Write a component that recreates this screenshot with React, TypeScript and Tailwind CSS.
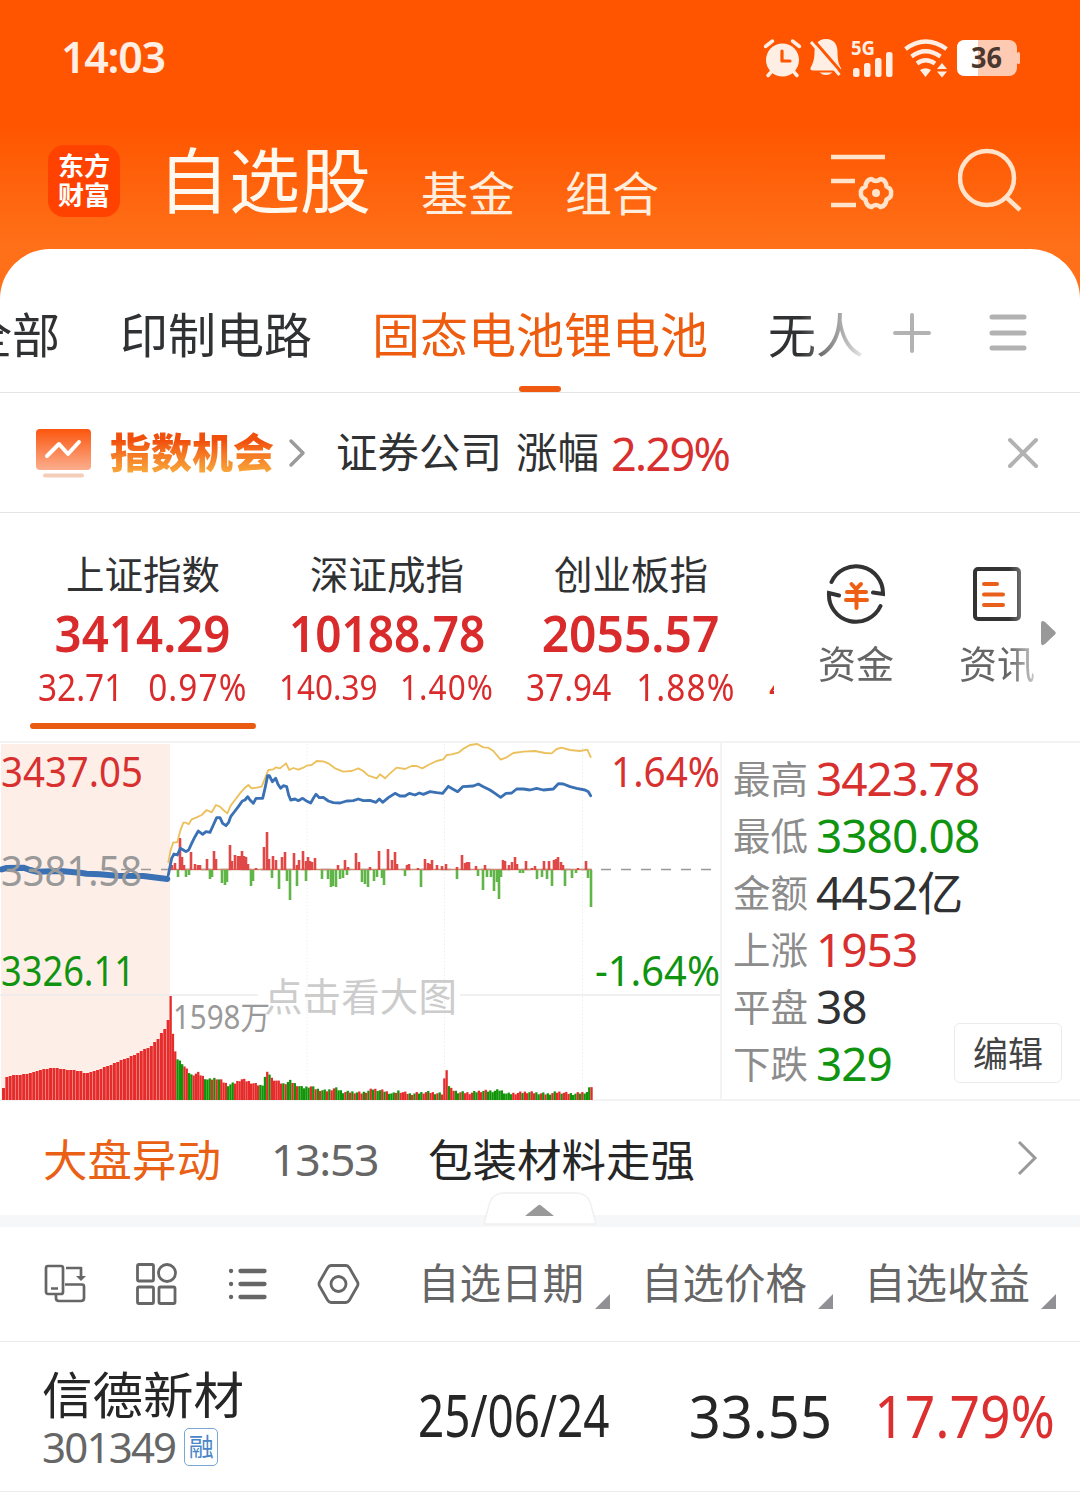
import React from 'react';

// 集合竞价量柱高度
const auctionVolumes = [
  12, 23, 24, 25, 25, 25, 26, 26, 27, 28, 29, 30, 31, 31, 32, 32, 32, 31, 31, 30, 30, 30, 29, 29, 27,
  27, 28, 29, 30, 31, 33, 34, 35, 37, 38, 40, 41, 42, 44, 45, 47, 49, 51, 52, 54, 58, 61, 67, 71, 80,
];

// 分时量关键点 [x, 高度]
const volumeShape: number[][] = [
  [170, 104], [172.4, 104], [172.6, 68], [174.5, 51], [177, 41], [182, 37], [186, 31], [191, 25], [198, 27],
  [202, 24], [208, 20], [216, 22], [222, 19], [228, 15], [235, 17], [241, 21], [250, 18], [255, 16], [262, 14],
  [266, 27], [269, 27], [271, 22], [277, 19], [283, 16], [290, 19], [297, 15], [303, 12], [310, 14], [316, 11],
  [326, 9], [335, 12], [343, 8], [353, 8], [362, 7], [373, 11], [384, 9], [393, 6], [398, 9], [410, 6],
  [427, 8], [443, 6], [445, 31], [447, 31], [449, 12], [457, 8], [470, 7], [480, 9], [493, 9], [500, 10],
  [507, 6], [527, 8], [547, 6], [558, 8], [573, 6], [587, 8], [590, 13], [593, 14],
];

const volumeColors =
  'RRRGGGRRGGRRRRRGGGRGRGRRRGGGRRRRRRRRRRRGGGRGRRRRRGRGGRGRGGGGGRGRGRGGRGRRGGGGRGRGRGRRGRGRGRGGRGRGGGRGRRRRGRGRGGRRGRRGRGRRRGRRGGRGRRRRGGRRGRGGGGGGGGGGGRRRRGRRGRRGGRGRGGRGRRGRRRGGGRGRGGGRG';

const buyBars: number[][] = [
  [172, 5], [175, 7], [180, 32], [182, 13], [184, 5], [191, 18], [195, 6], [198, 5], [200, 5], [207, 11],
  [214, 19], [216, 11], [230, 25], [232, 9], [235, 15], [238, 14], [240, 14], [242, 19], [244, 14], [246, 13],
  [248, 6], [256, 2], [264, 23], [267, 38], [269, 11], [273, 14], [276, 10], [282, 13], [285, 18], [294, 17],
  [297, 5], [299, 10], [303, 19], [306, 9], [308, 13], [310, 9], [312, 8], [315, 12], [338, 5], [345, 10],
  [348, 3], [356, 17], [359, 8], [370, 3], [379, 19], [388, 21], [392, 10], [395, 18], [397, 6], [407, 5],
  [409, 6], [418, 2], [425, 11], [428, 7], [430, 6], [432, 10], [437, 5], [442, 4], [446, 6], [457, 3],
  [462, 15], [465, 7], [467, 8], [469, 8], [476, 4], [485, 5], [503, 10], [505, 9], [509, 5], [512, 8],
  [515, 13], [517, 6], [526, 9], [532, 2], [535, 4], [544, 9], [549, 9], [554, 10], [556, 11], [558, 13],
  [561, 8], [563, 5], [578, 2], [586, 9],
];

const sellBars: number[][] = [
  [178, 7], [186, 7], [189, 5], [210, 9], [212, 7], [222, 13], [225, 15], [227, 12], [251, 16], [253, 11],
  [272, 8], [279, 19], [287, 11], [290, 30], [297, 16], [306, 11], [322, 9], [328, 9], [331, 17], [333, 16],
  [336, 17], [340, 9], [343, 8], [347, 5], [362, 12], [365, 14], [368, 17], [374, 11], [377, 7], [382, 8],
  [384, 15], [405, 6], [421, 17], [457, 9], [478, 6], [483, 20], [487, 7], [491, 7], [494, 21], [497, 12],
  [499, 29], [501, 7], [520, 3], [523, 3], [537, 9], [542, 7], [547, 9], [552, 16], [565, 16], [572, 8],
  [576, 3], [588, 8], [591, 37],
];

const openLine = '5,403 20,399 70,398 90,405 110,410 180,408 240,413 260,416 300,418 350,422 430,423 460,427 502,432';

const priceLine =
  '505,420 515,370 522,357 532,360 541,340 550,345 558,350 566,345 575,325 585,305 595,288 608,298 618,290 630,292 640,270 650,248 660,248 668,265 678,272 686,262 692,245 705,228 715,215 727,198 735,195 743,185 750,195 760,205 768,190 780,190 788,190 795,160 803,122 808,122 817,140 827,130 834,148 842,160 850,152 860,155 866,180 872,195 885,192 895,197 908,190 918,197 932,204 940,190 948,178 958,188 970,187 985,198 1000,203 1020,204 1040,198 1060,197 1075,192 1090,197 1110,196 1128,202 1138,192 1148,202 1165,188 1185,175 1200,183 1215,183 1228,175 1245,180 1258,174 1270,178 1290,170 1310,173 1328,175 1345,154 1358,162 1373,170 1388,155 1420,153 1435,147 1450,155 1470,165 1485,175 1502,187 1518,175 1535,174 1550,162 1570,162 1590,165 1610,160 1630,165 1660,162 1675,146 1690,147 1710,155 1730,160 1755,165 1765,170 1772,182';

const avgLine =
  '505,382 512,345 520,322 532,322 540,290 550,263 558,263 566,268 575,253 590,247 605,240 620,225 635,232 648,210 660,215 670,225 682,235 692,212 705,195 720,175 735,158 745,150 755,160 770,158 785,155 795,130 805,105 820,103 828,97 840,100 858,85 868,105 880,99 895,104 910,98 920,92 935,90 950,78 970,79 985,85 1005,100 1030,110 1055,108 1075,100 1090,108 1105,122 1115,125 1130,130 1140,118 1155,130 1170,115 1190,98 1215,102 1235,93 1250,93 1267,100 1285,90 1310,78 1330,73 1340,60 1355,58 1375,53 1392,40 1410,30 1432,27 1450,37 1465,38 1480,48 1502,74 1520,67 1540,54 1570,50 1605,48 1635,54 1655,55 1670,42 1685,38 1710,45 1740,48 1762,44 1772,66';

const volumeAt = (x: number) => {
  for (let i = 1; i < volumeShape.length; i++) {
    const [x0, h0] = volumeShape[i - 1];
    const [x1, h1] = volumeShape[i];
    if (x <= x1) return h0 + ((h1 - h0) * (x - x0)) / (x1 - x0);
  }
  return 8;
};

const minutes = Array.from({ length: 184 }, (_, i) => i);

const StatusIcons: React.FC = () => (
  <svg className="mt-[2px]" width="262" height="44" viewBox="0 0 262 44" fill="#ffeee3">
    {/* 闹钟 */}
    <circle cx="22.5" cy="23" r="16.5" />
    <path d="M5.500 9.500L12.500 4M32.500 4L39.500 9.500M12 34L8 38.500M33 34L37 38.500" stroke="#ffeee3" strokeWidth="3.500" strokeLinecap="round" />
    <path d="M22 14V24H30" fill="none" stroke="#ff5500" strokeWidth="3.200" strokeLinecap="round" strokeLinejoin="round" />
    {/* 静音 */}
    <path d="M66 2C57 2 54.500 9 54.500 15C54.500 24 52 28 50.500 31Q50 33.500 53 33.500H79Q82 33.500 81 31C79 28 77.500 24 77.500 15C77.500 9 75 2 66 2ZM59.500 35.500Q66 40.500 72.500 35.500Z" />
    <path d="M53 2.500L83 37" stroke="#ff5500" strokeWidth="3" />
    <path d="M51 5L79.500 38" stroke="#ffeee3" strokeWidth="3" />
    {/* 信号 */}
    <text x="91" y="17.500" fontSize="19.500" fontWeight="700" textLength="24" lengthAdjust="spacingAndGlyphs">5G</text>
    <rect x="93" y="31" width="6.500" height="9" rx="2.500" />
    <rect x="104" y="26" width="6.500" height="14" rx="2.500" />
    <rect x="115" y="21" width="6.500" height="19" rx="2.500" />
    <rect x="126" y="15" width="6.500" height="25" rx="2.500" />
    {/* 无线 */}
    <g fill="none" stroke="#ffeee3" strokeWidth="4.200">
      <path d="M145.500 12Q165.500 -3 186.500 12" />
      <path d="M151.500 19.500Q165.500 9 180.500 19.500" />
      <path d="M157 26.500Q165.500 20 175 26.500" />
    </g>
    <path d="M160 33Q165.500 29.500 171 33L165.500 40ZM182 26L187 32H177ZM182 40.500L187 34.500H177Z" />
    {/* 电量 */}
    <rect x="197" y="3" width="60" height="36" rx="8" fill="#ffcab2" />
    <path d="M205 3H218V39H205Q197 39 197 31V11Q197 3 205 3Z" fill="#ffffff" />
    <rect x="257" y="15" width="3" height="12" rx="1.500" fill="#ffcab2" />
    <text x="211" y="31" fontSize="28" fontWeight="700" fill="#4a3830" textLength="31" lengthAdjust="spacingAndGlyphs">36</text>
  </svg>
);

const Header: React.FC = () => (
  <header className="h-[249px] text-white">
    <div className="flex h-[116px] items-center justify-between pl-[61px] pr-[58px]">
      <span className="-mt-[3px] text-[43px] font-semibold leading-none tracking-[-1.3px] text-[#ffeee3]">14:03</span>
      <StatusIcons />
    </div>
    <div className="flex h-[133px] items-start">
      <div className="ml-12 mt-[29px] flex h-[72px] w-[72px] flex-col items-center justify-center rounded-[16px] bg-[#ff4200] text-[26px] font-bold leading-[29px]">
        <span>东方</span>
        <span>财富</span>
      </div>
      <h1 className="ml-[38px] mt-[28px] w-[213px] whitespace-nowrap text-[71px] leading-[72px] text-[#fff8ee]">自选股</h1>
      <span className="ml-[50px] mt-[53px] text-[47px] leading-[48px] text-[#ffeedd]">基金</span>
      <span className="ml-[50px] mt-[53px] text-[47px] leading-[48px] text-[#ffeedd]">组合</span>
      <svg className="ml-[171px] mt-[36px]" width="66" height="62" viewBox="0 0 66 62" fill="none" stroke="#ffe3cb" strokeWidth="4.500">
        <path d="M1 5H55M1 29H25M1 53H26" />
        <path d="M41.500 27Q46 31 50.500 27Q56 28 56.500 34.500Q62 37 61 41Q62 45 56.500 47.500Q56 54 50.500 55Q46 51 41.500 55Q36 54 35.500 47.500Q30 45 31 41Q30 37 35.500 34.500Q36 28 41.500 27Z" strokeWidth="4.500" strokeLinejoin="round" />
        <circle cx="46" cy="41" r="4" fill="#ffe3cb" stroke="none" />
      </svg>
      <svg className="ml-[62px] mt-[32px]" width="66" height="66" viewBox="0 0 66 66" fill="none" stroke="#ffe3cb" strokeWidth="4.500">
        <circle cx="29" cy="30" r="27" />
        <path d="M48 49L62 62" />
      </svg>
    </div>
  </header>
);

const GroupTabs: React.FC = () => (
  <nav className="flex h-[144px] items-center border-b border-[#e4e4e6] pt-7 text-[48px] leading-none text-[#303133]">
    <div className="flex h-full w-[862px] overflow-hidden whitespace-nowrap [mask-image:linear-gradient(to_right,black_800px,transparent_870px)]">
      <span className="-ml-9 mt-[34px]">全部</span>
      <span className="ml-[60px] mt-[34px]">印制电路</span>
      <div className="ml-[60px] flex flex-col items-center text-[#ee5c10]">
        <span className="mt-[34px]">固态电池锂电池</span>
        <span className="mt-auto h-[6px] w-[42px] rounded-full bg-[#f05a10]" />
      </div>
      <span className="ml-[60px] mt-[34px]">无人机</span>
    </div>
    <svg className="ml-[30px] -mt-[4px]" width="40" height="40" viewBox="0 0 40 40" stroke="#b2b2b2" strokeWidth="4" strokeLinecap="round">
      <path d="M3 20H37M20 2V38" />
    </svg>
    <svg className="ml-[56px] -mt-[4px]" width="40" height="40" viewBox="0 0 40 40" stroke="#b2b2b2" strokeWidth="5" strokeLinecap="round">
      <path d="M4 4H36M4 20H36M4 35H36" />
    </svg>
  </nav>
);

const IndexBanner: React.FC = () => (
  <section className="flex h-[120px] items-center border-b border-[#e4e4e6] text-[41.500px] leading-none text-[#303133]">
    <svg className="ml-9" width="56" height="50" viewBox="0 0 56 50" fill="none">
      <defs>
        <linearGradient id="board" x1="0" y1="0" x2="0" y2="1">
          <stop offset="0" stopColor="#fb560e" />
          <stop offset="1" stopColor="#fbae8e" />
        </linearGradient>
      </defs>
      <rect width="55" height="41" y="1" rx="4" fill="url(#board)" />
      <path d="M11 28L23 16L32 26L43 14" stroke="#fff" strokeWidth="4" strokeLinecap="round" strokeLinejoin="round" />
      <rect x="7" y="45.500" width="41" height="4" rx="2" fill="#f4cdb9" />
    </svg>
    <span className="ml-[18px] mt-[3px] bg-linear-to-b from-[#f0500c] from-20% to-[#f8a63a] to-90% bg-clip-text pb-1 text-[41px] font-black text-transparent">指数机会</span>
    <svg className="ml-[14px]" width="18" height="30" viewBox="0 0 18 30" fill="none" stroke="#9b9b9b" strokeWidth="3.500" strokeLinecap="round" strokeLinejoin="round">
      <path d="M3 3L15 15L3 27" />
    </svg>
    <span className="ml-[30px]">证券公司</span>
    <span className="ml-[14px]">涨幅</span>
    <span className="ml-[12px] mt-[1px] text-[45px] tracking-[-1.700px] text-[#d8302f]">2.29%</span>
    <svg className="ml-auto mr-[41px]" width="32" height="32" viewBox="0 0 32 32" stroke="#b2b2b2" strokeWidth="4" strokeLinecap="round">
      <path d="M3 3L29 29M29 3L3 29" />
    </svg>
  </section>
);

const wideDiff = 'mt-[10px] flex h-[38px] scale-x-[0.890] gap-[28px] text-[37.500px]';
const narrowDiff = 'mt-[11px] flex h-[37px] scale-x-[0.900] gap-[25px] text-[35px]';

const indices = [
  { name: '上证指数', value: '3414.29', diff: '32.71', rate: '0.97%', active: true, scale: 'scale-x-[0.930]', row: wideDiff },
  { name: '深证成指', value: '10188.78', diff: '140.39', rate: '1.40%', active: false, scale: 'scale-x-[0.900]', row: narrowDiff },
  { name: '创业板指', value: '2055.57', diff: '37.94', rate: '1.88%', active: false, scale: 'scale-x-[0.940]', row: wideDiff },
];

const IndexOverview: React.FC = () => (
  <section className="flex h-[228px] items-start leading-none">
    <div className="flex h-full w-[774px] overflow-hidden pl-[21px]">
      {indices.map((item) => (
        <div key={item.name} className="flex w-[244px] shrink-0 flex-col items-center whitespace-nowrap text-[#d92b2c]">
          <span className="mt-[42px] h-[39px] text-[38.500px] text-[#303133]">{item.name}</span>
          <span className={`mt-[13px] h-[51px] text-[51px] font-semibold leading-[51px] ${item.scale}`}>{item.value}</span>
          <div className={item.row}>
            <span>{item.diff}</span>
            <span className="tracking-[1.200px]">{item.rate}</span>
          </div>
          {item.active && <span className="mt-[17px] h-[6px] w-[226px] rounded-full bg-[#ea5b12]" />}
        </div>
      ))}
      <span className="ml-[16px] mt-[153px] text-[38px] text-[#d92b2c]">4</span>
    </div>
    <div className="flex w-[262px] overflow-hidden text-[38px] text-[#666] [mask-image:linear-gradient(to_right,black_235px,transparent_275px)]">
      <div className="ml-[44px] flex flex-col items-center">
        <svg className="mt-[51px]" width="60" height="60" viewBox="0 0 60 60" fill="none" stroke="#333" strokeWidth="4" strokeLinecap="round">
          <path d="M5.500 18A27 27 0 0 1 57 30L47 28.500M54.500 42A27 27 0 0 1 3 29L13 31.500" />
          <path d="M25.500 20L30 25L35 20M21 28H40M20 36H41M30.500 26V44" stroke="#ee5f14" />
        </svg>
        <span className="mt-[20px] h-[42px]">资金</span>
      </div>
      <div className="ml-[65px] flex shrink-0 flex-col items-center">
        <svg className="mt-[51px]" width="60" height="60" viewBox="0 0 60 60" fill="none" stroke="#333" strokeWidth="4" strokeLinecap="round">
          <rect x="8" y="5" width="44" height="50" rx="3" />
          <path d="M17 20H30M17 30.500H36M17 41H36" stroke="#e8601c" />
        </svg>
        <span className="mt-[20px] h-[42px]">资讯</span>
      </div>
    </div>
    <svg className="ml-[4px] mt-[107px]" width="18" height="26" viewBox="0 0 18 26" fill="#999">
      <path d="M1 4Q1 -1 5 2L15 11.500Q16.500 13 15 14.500L5 24Q1 27 1 22Z" />
    </svg>
  </section>
);

const MinuteChart: React.FC = () => (
  <svg width="720" height="360" viewBox="0 0 720 360">
    <rect x="1" y="3" width="169" height="356" fill="#fdeee8" />
    <path d="M307 3V358M444.500 3V358M582.500 3V358" stroke="#eeeeee" strokeDasharray="1.500 2" />
    <path d="M0 254H258M460 254H720" stroke="#ebebeb" strokeWidth="1.500" />
    <path d="M121 128.500H720" stroke="#999" strokeWidth="1.500" strokeDasharray="10 10" />
    {/* 买卖力道 */}
    <path d="M171 128.500H592" stroke="#c98a70" strokeWidth="1.500" />
    {buyBars.map(([x, h]) => (
      <rect key={x} x={x - 1.3} y={129 - h} width="2.600" height={h} fill="#e04848" />
    ))}
    {sellBars.map(([x, h]) => (
      <rect key={x} x={x - 1.3} y="129" width="2.600" height={h} fill="#60b548" />
    ))}
    <g transform="translate(0 -6) scale(0.33333)" fill="none" strokeLinejoin="round" strokeLinecap="round">
      <polyline points={avgLine} stroke="#ecc05c" strokeWidth="5.500" />
      <polyline points={openLine} stroke="#3a70b4" strokeWidth="18" />
      <polyline points={priceLine} stroke="#3a70b4" strokeWidth="8.500" />
    </g>
    <g fontSize="42">
      <text x="1" y="46" fill="#d8302f" textLength="142" lengthAdjust="spacingAndGlyphs">3437.05</text>
      <text x="611" y="46" fill="#d8302f" textLength="109" lengthAdjust="spacingAndGlyphs">1.64%</text>
      <text x="1" y="245" fill="#109410" textLength="134" lengthAdjust="spacingAndGlyphs">3326.11</text>
      <text x="595" y="245" fill="#109410" textLength="125" lengthAdjust="spacingAndGlyphs">-1.64%</text>
      <text x="1" y="145" fill="#999999" textLength="141" lengthAdjust="spacingAndGlyphs">3381.58</text>
    </g>
    {/* 成交量 */}
    {auctionVolumes.map((h, i) => (
      <rect key={i} x={2 + i * 3.36} y={359 - h} width="3" height={h} fill="#e62b2b" />
    ))}
    {minutes.map((i) => {
      const x = 169.5 + i * 2.3;
      const h = Math.max(5, volumeAt(x + 1) + (i > 3 ? ((i * 7) % 5) * 0.6 - 1.2 : 0));
      return <rect key={i} x={x} y={359 - h} width="2.300" height={h} fill={volumeColors[i] === 'G' ? '#129408' : '#e62b2b'} />;
    })}
    <text x="173" y="288" fontSize="32" fill="#999" textLength="97" lengthAdjust="spacingAndGlyphs">1598万</text>
    <text x="264" y="269.500" fontSize="38.500" fill="#cccccc" textLength="193">点击看大图</text>
  </svg>
);

const quotes = [
  { label: '最高', value: '3423.78', color: 'text-[#d8302f]' },
  { label: '最低', value: '3380.08', color: 'text-[#109410]' },
  { label: '金额', value: '4452亿', color: 'text-[#303133]' },
  { label: '上涨', value: '1953', color: 'text-[#d8302f]' },
  { label: '平盘', value: '38', color: 'text-[#303133]' },
  { label: '下跌', value: '329', color: 'text-[#109410]' },
];

const MarketPanel: React.FC = () => (
  <section className="flex h-[360px] border-y-2 border-[#f3f3f3]">
    <div className="-mt-[2px] h-[360px] w-[720px] shrink-0">
      <MinuteChart />
    </div>
    <div className="relative flex-1 border-l-2 border-[#f3f3f3] pl-[11px] pt-[7px] leading-none">
      {quotes.map((quote) => (
        <div key={quote.label} className="flex h-[57px] items-center">
          <span className="w-[83px] text-[37.500px] text-[#8c8c8c]">{quote.label}</span>
          <span className={`-mt-[2px] text-[46px] tracking-[-1px] ${quote.color}`}>{quote.value}</span>
        </div>
      ))}
      <button className="absolute bottom-[16px] right-[18px] h-[60px] w-[108px] rounded-md border border-[#ebebeb] bg-white text-[35px] text-[#444]">
        编辑
      </button>
    </div>
  </section>
);

const MarketAlert: React.FC = () => (
  <section className="relative flex h-[126px] items-center border-b-[12px] border-[#f6f7f9] pt-1 text-[44.500px] leading-none">
    <span className="ml-[43px] text-[#ea6014]">大盘异动</span>
    <span className="-mt-[2px] ml-[50px] w-[157px] tracking-[-1.300px] text-[#666]">13:53</span>
    <span className="text-[#262626]">包装材料走强</span>
    <svg className="ml-auto mr-[42px] -mt-[4px]" width="22" height="36" viewBox="0 0 22 36" fill="none" stroke="#999" strokeWidth="3">
      <path d="M3 2L19 18L3 34" />
    </svg>
    <svg className="absolute -bottom-[10px] left-[483px]" width="114" height="33" viewBox="0 0 114 33">
      <path d="M1 32L6 13Q9 1 22 1H92Q105 1 108 13L113 32Z" fill="#fff" stroke="#f0f0f0" strokeWidth="1.500" />
      <path d="M42 24L55 13.500Q56.500 12 58 13.500L71 24Z" fill="#999" />
    </svg>
  </section>
);

const columns = ['自选日期', '自选价格', '自选收益'];

const StockTable: React.FC = () => (
  <section className="leading-none">
    <div className="flex h-[115px] items-center border-b border-[#ececec]">
      <div className="flex w-[418px] shrink-0 items-center gap-[47px] pl-[44px]">
        <svg width="44" height="44" viewBox="0 0 44 44" fill="none" stroke="#666" strokeWidth="2.700" strokeLinejoin="round">
          <path d="M21 22.500H38Q40 22.500 40 24.500V36Q40 39 37 39H15Q12 39 12 36V32" />
          <rect x="2" y="4" width="17" height="28" rx="2" fill="#fff" />
          <path d="M7 26.500H14M22 6H37V14" />
          <path d="M32 14H42L37 19Z" fill="#666" stroke="none" />
        </svg>
        <svg width="44" height="44" viewBox="0 0 44 44" fill="none" stroke="#666" strokeWidth="2.800">
          <rect x="2.500" y="2.500" width="16" height="16.500" rx="1.500" />
          <circle cx="32" cy="11" r="8.500" />
          <rect x="2.500" y="25" width="16" height="16.500" rx="1.500" />
          <rect x="24" y="25" width="16" height="16.500" rx="1.500" />
        </svg>
        <svg width="44" height="44" viewBox="0 0 44 44" stroke="#666" strokeWidth="4.300" strokeLinecap="round">
          <path d="M5 9H5.100M5 22H5.100M5 35H5.100M14.500 9H38.500M14.500 22H38.500M14.500 35H38.500" />
        </svg>
        <svg width="44" height="44" viewBox="0 0 44 44" fill="none" stroke="#666" strokeWidth="2.800" strokeLinejoin="round">
          <path d="M14 3.500H29Q31 3.500 32.500 6L40.500 20Q41.500 22 40.500 24L32.500 38Q31 40.500 29 40.500H14Q12 40.500 10.500 38L2.500 24Q1.500 22 2.500 20L10.500 6Q12 3.500 14 3.500Z" />
          <circle cx="21.500" cy="22" r="7.500" />
        </svg>
      </div>
      {columns.map((column) => (
        <div key={column} className="flex w-[223px] shrink-0 items-end text-[#666]">
          <span className="text-[41.500px]">{column}</span>
          <svg className="ml-[11px] -mb-[4px]" width="15" height="15" viewBox="0 0 15 15" fill="#919195">
            <path d="M15 0V15H0Z" />
          </svg>
        </div>
      ))}
    </div>
    <div className="flex h-[150px] items-center border-b border-[#ececec] text-[#262626]">
      <div className="w-[418px] pl-[42px] pt-[5px]">
        <div className="text-[50.500px]">信德新材</div>
        <div className="mt-[5px] flex items-center text-[42px] tracking-[-1.800px] text-[#666]">
          301349
          <span className="ml-[9px] flex h-[38px] w-[34px] items-center justify-center rounded-[5px] border border-[#7ba6d6] text-[25px] tracking-normal text-[#4a86c6]">
            融
          </span>
        </div>
      </div>
      <span className="-mt-[3px] w-[190px] origin-left scale-x-[0.790] whitespace-nowrap text-[58px]">25/06/24</span>
      <span className="-mt-[3px] w-[224px] origin-right scale-x-[0.950] text-right text-[59px]">33.55</span>
      <span className="-mt-[3px] ml-[23px] w-[200px] origin-right scale-x-[0.905] text-right text-[59px] text-[#dc3030]">17.79%</span>
    </div>
  </section>
);

const App: React.FC = () => {
  return (
    <div className="h-[1507px] w-[1080px] overflow-hidden bg-white bg-[linear-gradient(to_bottom,#ff5500_0px,#ff5500_125px,#ff7018_245px,#ff7018_320px,#ffffff_320px)] font-['Noto_Sans','Noto_Sans_CJK_SC',sans-serif]">
      <Header />
      <main className="h-[1258px] rounded-t-[50px] bg-white">
        <GroupTabs />
        <IndexBanner />
        <IndexOverview />
        <MarketPanel />
        <MarketAlert />
        <StockTable />
      </main>
    </div>
  );
};

export default App;
